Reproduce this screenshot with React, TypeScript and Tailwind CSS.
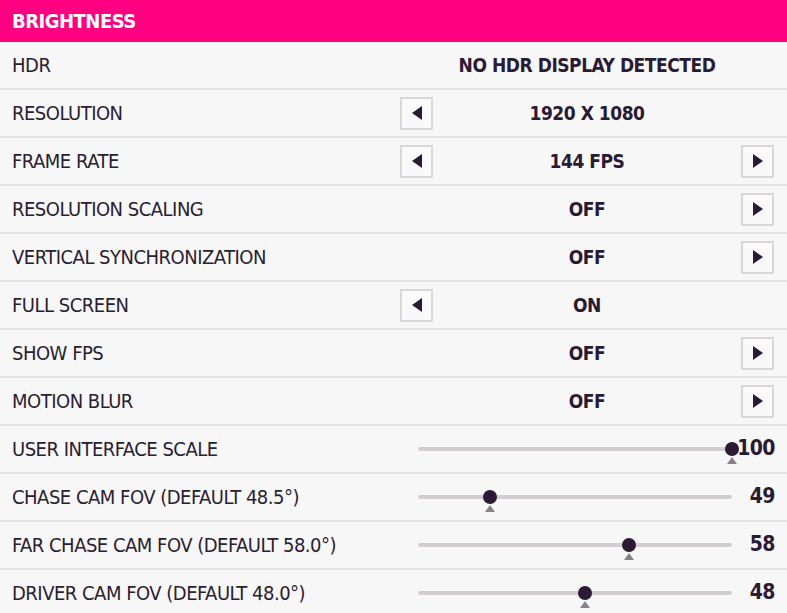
const font = { fontFamily: '"DejaVu Sans Condensed", "DejaVu Sans", sans-serif' };

type Row =
  | { label: string; kind: 'choice'; value: string; left: boolean; right: boolean }
  | { label: string; kind: 'slider'; value: number; pos: number };

const rows: Row[] = [
  { label: 'HDR', kind: 'choice', value: 'NO HDR DISPLAY DETECTED', left: false, right: false },
  { label: 'RESOLUTION', kind: 'choice', value: '1920 X 1080', left: true, right: false },
  { label: 'FRAME RATE', kind: 'choice', value: '144 FPS', left: true, right: true },
  { label: 'RESOLUTION SCALING', kind: 'choice', value: 'OFF', left: false, right: true },
  { label: 'VERTICAL SYNCHRONIZATION', kind: 'choice', value: 'OFF', left: false, right: true },
  { label: 'FULL SCREEN', kind: 'choice', value: 'ON', left: true, right: false },
  { label: 'SHOW FPS', kind: 'choice', value: 'OFF', left: false, right: true },
  { label: 'MOTION BLUR', kind: 'choice', value: 'OFF', left: false, right: true },
  { label: 'USER INTERFACE SCALE', kind: 'slider', value: 100, pos: 1 },
  { label: 'CHASE CAM FOV (DEFAULT 48.5°)', kind: 'slider', value: 49, pos: 0.229 },
  { label: 'FAR CHASE CAM FOV (DEFAULT 58.0°)', kind: 'slider', value: 58, pos: 0.672 },
  { label: 'DRIVER CAM FOV (DEFAULT 48.0°)', kind: 'slider', value: 48, pos: 0.532 },
];

function ArrowBox({ dir }: { dir: 'left' | 'right' }) {
  return (
    <div className="w-[33px] h-[33px] border-2 border-[#d9d7d9] bg-[#f9f9f9] flex items-center justify-center">
      <svg width="12" height="16" viewBox="0 0 12 16">
        {dir === 'left' ? (
          <polygon points="11,1 11,15 1,8" fill="#2b1a33" />
        ) : (
          <polygon points="1,1 1,15 11,8" fill="#2b1a33" />
        )}
      </svg>
    </div>
  );
}

function Slider({ pos, value }: { pos: number; value: number }) {
  return (
    <div className="flex items-center w-[357px] ml-[18px]">
      <div className="relative w-[314px] h-[4px] bg-[#d1cdd1] rounded-full">
        <div
          className="absolute top-1/2 w-[14px] h-[14px] -mt-[7px] -ml-[7px] rounded-full bg-[#2b1a33]"
          style={{ left: `${pos * 100}%` }}
        />
        <div
          className="absolute top-[10px] -ml-[5px] w-0 h-0 border-l-[5px] border-r-[5px] border-b-[7px] border-l-transparent border-r-transparent border-b-[#8b818b]"
          style={{ left: `${pos * 100}%` }}
        />
      </div>
      <div className="flex-1 text-right text-[21px] font-bold text-[#2b1a33] tracking-tight">{value}</div>
    </div>
  );
}

export default function App() {
  return (
    <div className="w-[787px] h-[613px] overflow-hidden bg-[#f5f5f5]" style={font}>
      <div className="h-[42px] bg-[#ff0080] flex items-center px-3">
        <span className="text-white font-bold text-[20px] tracking-tight">BRIGHTNESS</span>
      </div>
      {rows.map((r) => (
        <div key={r.label} className="h-[48px] flex items-center border-b-2 border-[#e3e3e3] bg-[#f7f7f7]">
          <div className="w-[400px] pl-3 text-[20px] text-[#2a2030] tracking-tight">{r.label}</div>
          {r.kind === 'choice' ? (
            <div className="flex items-center w-[374px]">
              <div className="w-[33px]">{r.left && <ArrowBox dir="left" />}</div>
              <div className="flex-1 text-center text-[19px] font-bold text-[#2b1a33] tracking-tight">{r.value}</div>
              <div className="w-[33px]">{r.right && <ArrowBox dir="right" />}</div>
            </div>
          ) : (
            <Slider pos={r.pos} value={r.value} />
          )}
        </div>
      ))}
    </div>
  );
}
